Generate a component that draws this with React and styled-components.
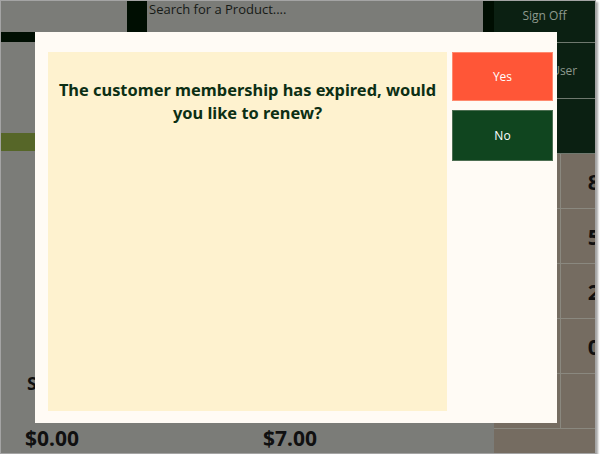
import React from 'react'
import styled, {createGlobalStyle} from 'styled-components'

// --------------- Global -------------------
const GlobalStyle = createGlobalStyle`
    body {
        margin: 0;
        background: #ffffff;
        font-family: "Open Sans", "Noto Sans", sans-serif;
    }
`

// --------------- Frame / background -------------------
const Frame = styled.div`
    position: relative;
    width: 594px;
    height: 452px;
    border: 1px solid #a4a4a4;
    overflow: hidden;
    box-shadow: 2px 2px 2px rgba(0, 0, 0, 0.35);
    display: grid;
    grid-template-columns: 493px 101px;
`

const Main = styled.div`
    background: #7b7c78;
    display: flex;
    flex-direction: column;
`

const TopBar = styled.div`
    height: 31px;
    display: flex;
    padding-left: 126px;
`

const SearchIcon = styled.div`
    width: 20px;
    background: #000e02;
`

const SearchText = styled.div`
    flex: 1;
    padding: 0 0 0 2px;
    font-size: 13px;
    line-height: 16px;
    color: #161a16;
`

const DarkEdge = styled.div`
    width: 11px;
    background: #000e02;
`

const Strip = styled.div`
    height: ${p => p.h}px;
    margin-top: ${p => p.top || 0}px;
    background: ${p => p.color};
`

const Totals = styled.div`
    margin-top: auto;
    display: grid;
    grid-template-columns: 238px 238px;
    grid-template-rows: 54px 28px;
    padding-left: 24px;
    font-family: "Noto Sans", "Open Sans", sans-serif;
    font-weight: 700;
    color: #101010;
`

const TotalLabel = styled.div`
    font-size: 18px;
    padding: 0 0 0 2px;
`

const TotalValue = styled.div`
    font-size: 21px;
    line-height: 26px;
`

const Side = styled.div`
    min-width: 0;
    display: flex;
    flex-direction: column;
    background: #756c61;
`

const SideButton = styled.div`
    height: ${p => p.h}px;
    width: 101px;
    background: #0b2012;
    border-bottom: 1px solid #6f786e;
    color: #8e998e;
    font-size: 12px;
    display: flex;
    justify-content: center;
    align-items: ${p => (p.top ? 'flex-start' : 'center')};
    padding-top: ${p => (p.top ? 6 : 0)}px;
    box-sizing: border-box;
    white-space: nowrap;
`

const Numpad = styled.div`
    width: 201px;
    display: grid;
    grid-template-columns: 67px 67px 67px;
    grid-auto-rows: 55px;
`

const Key = styled.div`
    border-right: 1px solid #8a887f;
    border-bottom: 1px solid #8a887f;
    display: flex;
    align-items: center;
    justify-content: center;
    font-family: "Noto Sans", "Open Sans", sans-serif;
    font-weight: 700;
    font-size: 22px;
    color: #101010;
`

// --------------- Modal -------------------
const Modal = styled.div`
    position: absolute;
    left: 34px;
    top: 31px;
    width: 522px;
    height: 391px;
    box-sizing: border-box;
    background: #fffbf5;
    padding: 20px 4px 12px 13px;
    display: flex;
    gap: 5px;
`

const MessagePanel = styled.div`
    width: 399px;
    background: #fef2cf;
    padding: 26px 8px 0;
    box-sizing: border-box;
    text-align: center;
    font-family: "Noto Sans", "Open Sans", sans-serif;
    font-weight: 700;
    font-size: 16.4px;
    line-height: 23px;
    color: #0c2f14;
`

const Actions = styled.div`
    flex: 1;
    display: flex;
    flex-direction: column;
    gap: 9px;
`

const ActionButton = styled.button`
    height: ${p => p.h}px;
    border: 1px solid ${p => p.edge};
    background: ${p => p.bg};
    color: #ffffff;
    font-family: "Open Sans", "Noto Sans", sans-serif;
    font-size: 12px;
    padding: 0;
    cursor: pointer;
`

const keys = ['7', '8', '9', '4', '5', '6', '1', '2', '3', '.', '0', 'C', '', '', '']

const App = () => {
    return (
        <>
            <GlobalStyle />
            <Frame>
                <Main>
                    <TopBar>
                        <SearchIcon />
                        <SearchText>Search for a Product....</SearchText>
                        <DarkEdge />
                    </TopBar>
                    <Strip h={10} color="#000e02" />
                    <Strip h={18} top={91} color="#566628" />
                    <Totals>
                        <TotalLabel>Subtotal</TotalLabel>
                        <TotalLabel>Total</TotalLabel>
                        <TotalValue>$0.00</TotalValue>
                        <TotalValue>$7.00</TotalValue>
                    </Totals>
                </Main>
                <Side>
                    <SideButton h={42} top>Sign Off</SideButton>
                    <SideButton h={56}>Switch User</SideButton>
                    <SideButton h={55} />
                    <Numpad>
                        {keys.map((k, i) => <Key key={i}>{k}</Key>)}
                    </Numpad>
                </Side>

                <Modal>
                    <MessagePanel>
                        The customer membership has expired, would you like to renew?
                    </MessagePanel>
                    <Actions>
                        <ActionButton h={49} bg="#ff5637" edge="#ff8a6e">Yes</ActionButton>
                        <ActionButton h={51} bg="#10451f" edge="#4d6e52">No</ActionButton>
                    </Actions>
                </Modal>
            </Frame>
        </>
    )
}

export default App
